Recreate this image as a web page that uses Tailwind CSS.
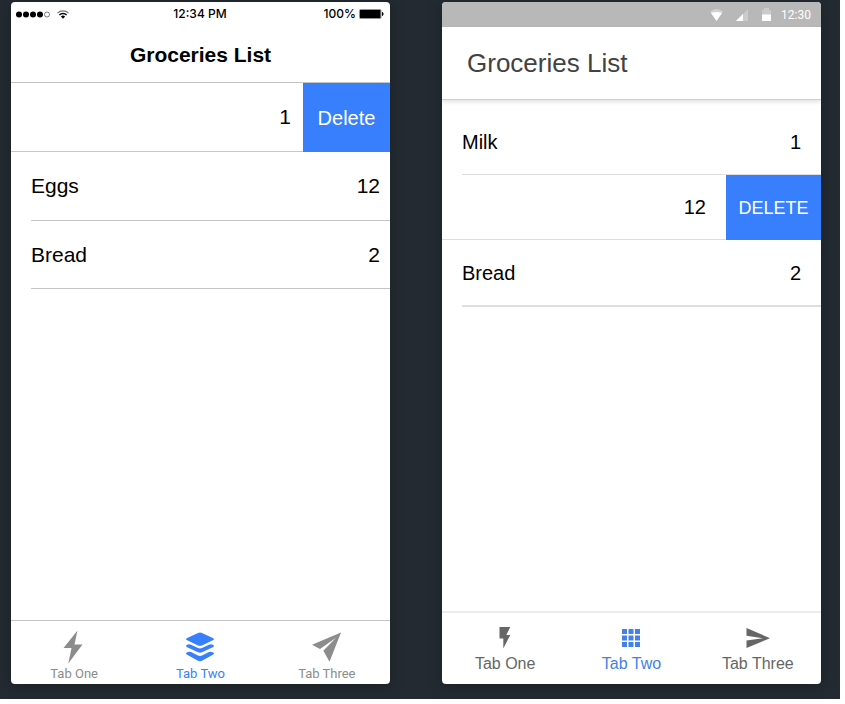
<!DOCTYPE html>
<html lang="en">
<head>
<meta charset="utf-8">
<meta name="viewport" content="width=device-width, initial-scale=1">
<title>Groceries List</title>
<script src="https://cdn.jsdelivr.net/npm/@tailwindcss/browser@4"></script>
</head>
<body class="flex min-h-screen bg-white pr-[5px] pb-[5px] font-['Liberation_Sans',Arial,sans-serif] text-black">
<main class="flex flex-1 gap-[52px] bg-[#232a31] pt-[2px] pr-[19px] pb-[15px] pl-[11px]">

  <!-- iOS -->
  <section class="flex min-w-0 flex-1 flex-col overflow-hidden rounded bg-white shadow-[0_2px_14px_rgba(0,0,0,0.25)]" aria-label="iOS">
    <div class="grid h-6 grid-cols-3 items-center pr-[6px] pl-[5px] font-[Inter,sans-serif] text-xs font-medium">
      <div class="flex items-center gap-[7px]">
        <svg class="h-[7px] w-[34px]" viewBox="0 0 34 7" aria-hidden="true">
          <circle cx="3" cy="3.5" r="3"/><circle cx="10" cy="3.5" r="3"/><circle cx="17" cy="3.5" r="3"/><circle cx="24" cy="3.5" r="3"/>
          <circle cx="31" cy="3.5" r="2.5" fill="none" stroke="#444" stroke-width=".7"/>
        </svg>
        <svg class="h-[9px] w-[12px]" viewBox="0 0 12 9" fill="none" aria-hidden="true">
          <path d="M.5 3.1a7.8 7.8 0 0 1 11 0" stroke="#777" stroke-width="1.3"/>
          <path d="M2.4 5a5.1 5.1 0 0 1 7.2 0" stroke="#000" stroke-width="1.4"/>
          <path d="M6 8.8 3.9 6.6a3 3 0 0 1 4.2 0z" fill="#000"/>
        </svg>
      </div>
      <div class="text-center">12:34 PM</div>
      <div class="flex items-center justify-end gap-[3px]">
        <span>100%</span>
        <svg class="h-[10px] w-[25px]" viewBox="0 0 25 10" aria-hidden="true">
          <rect x=".5" y=".5" width="21.5" height="9" rx="1" fill="#fff" stroke="#777" stroke-width=".8"/>
          <rect x="1" y="1" width="20.5" height="8"/>
          <path d="M23 3c2 .6 2 3.400 0 4z"/>
        </svg>
      </div>
    </div>
    <header class="flex h-[57px] items-center justify-center border-b border-[#c4c4c4] pt-[2px]">
      <h1 class="text-[21px] font-bold">Groceries List</h1>
    </header>
    <ul class="flex-1 text-[21px]">
      <li class="flex h-[69px]">
        <div class="flex flex-1 items-center justify-end border-b border-[#c8c7cc] pr-3">1</div>
        <button type="button" class="w-[87px] bg-[#387ffe] text-xl text-white">Delete</button>
      </li>
      <li class="ml-5 flex h-[69px] items-center justify-between border-b border-[#c4c4c4] pr-[10px]"><span>Eggs</span><span>12</span></li>
      <li class="ml-5 flex h-[68px] items-center justify-between border-b border-[#c4c4c4] pr-[10px]"><span>Bread</span><span>2</span></li>
    </ul>
    <nav class="grid h-16 grid-cols-3 border-t border-[#c4c4c4] font-[Roboto,sans-serif] text-[13px] leading-4 text-[#8c8c8c]">
      <button type="button" class="flex flex-col items-center pt-[9px]">
        <svg class="mb-px h-[35px] w-[30px]" viewBox="0 0 30 35" fill="currentColor" aria-hidden="true"><path d="M18.500 .5 4.500 18h8L9.300 33.500 23.500 14.500h-8z"/></svg>
        <span>Tab One</span>
      </button>
      <button type="button" class="flex flex-col items-center pt-[9px] text-[#387ffe]" aria-current="page">
        <svg class="mb-px h-[35px] w-[30px]" viewBox="0 0 30 35" fill="currentColor" aria-hidden="true">
          <path d="M13 3q2-1 4 0l11.300 5.300q1.500.9 0 1.800L17 15.400q-2 .9-4 0L1.700 10.100q-1.500-.9 0-1.800z"/>
          <path d="M1.700 15.100q2.300-1.500 4.300-.4l7 3.400q2 .9 4 0l7-3.400q2-1.100 4.300.4 1.500 1 0 1.900L17 22.300q-2 .9-4 0L1.700 17q-1.500-.9 0-1.900z"/>
          <path d="M1.700 22.500Q4 21 6 22.100l7 3.400q2 .9 4 0l7-3.400q2-1.100 4.300.4 1.500 1 0 1.900L17 30.700q-2 .9-4 0L1.700 24.400q-1.500-.9 0-1.900z"/>
        </svg>
        <span>Tab Two</span>
      </button>
      <button type="button" class="flex flex-col items-center pt-[9px]">
        <svg class="mb-px h-[35px] w-[30px]" viewBox="0 0 30 35" fill="currentColor" aria-hidden="true"><path d="M29 2.500 0 14.800 8 19 24 7.800 11.300 20.800 17.500 31.800z"/></svg>
        <span>Tab Three</span>
      </button>
    </nav>
  </section>

  <!-- Material -->
  <section class="flex min-w-0 flex-1 flex-col overflow-hidden rounded bg-white shadow-[0_2px_14px_rgba(0,0,0,0.25)]" aria-label="Material Design">
    <div class="flex h-[25px] items-center justify-end bg-[#b8b8b8] pr-[10px] font-[Roboto,sans-serif] text-xs text-white">
      <svg class="mr-[13px] h-3 w-[13px]" viewBox="0 0 13 12" aria-hidden="true"><path d="M0 2.500q6.500-5 13 0L6.500 12z" fill="#d2d2d2"/><path d="M1 4q5.500-2 11 0L6.500 12z" fill="#fff"/></svg>
      <svg class="mr-[14px] h-3 w-3" viewBox="0 0 12 12" aria-hidden="true"><path d="M12 0v12H0z" fill="#cbcbcb"/><path d="M7 5v7H0z" fill="#fff"/></svg>
      <svg class="mr-[10px] h-[13px] w-[9px]" viewBox="0 0 9 13" aria-hidden="true"><path d="M0 2h2V0h5v2h2v5H0z" fill="#cbcbcb"/><path d="M0 6.500h9V13H0z" fill="#fff"/></svg>
      <span>12:30</span>
    </div>
    <header class="flex h-[73px] items-center border-b border-[#d0d0d0] pl-[25px] shadow-[0_2px_4px_rgba(0,0,0,0.12)]">
      <h1 class="text-[26px] text-[#424242]">Groceries List</h1>
    </header>
    <ul class="flex-1 pt-[10px] text-xl">
      <li class="ml-5 flex h-[65px] items-center justify-between border-b border-[#dedede] pr-5"><span>Milk</span><span>1</span></li>
      <li class="flex h-[65px]">
        <div class="flex flex-1 items-center justify-end border-b border-[#dedede] pr-5">12</div>
        <button type="button" class="w-[95px] bg-[#387ffe] text-lg text-white">DELETE</button>
      </li>
      <li class="ml-5 flex h-[67px] items-center justify-between border-b-2 border-[#dedede] pr-5"><span>Bread</span><span>2</span></li>
    </ul>
    <nav class="grid h-[73px] grid-cols-3 border-t-2 border-[#ececec] text-base leading-5 text-[#666]">
      <button type="button" class="flex flex-col items-center pt-[11px]">
        <svg class="mb-[6px] h-6 w-6" viewBox="0 0 24 24" fill="currentColor" aria-hidden="true"><path d="M6.500 3v11.500h3.800V24.500l7-13.500h-4L17.300 3z"/></svg>
        <span>Tab One</span>
      </button>
      <button type="button" class="flex flex-col items-center pt-[11px] text-[#4480e8]" aria-current="page">
        <svg class="mb-[6px] h-6 w-6" viewBox="0 0 24 24" fill="currentColor" aria-hidden="true"><path d="M3 5h5v5H3zm6.500 0h5v5h-5zM16 5h5v5h-5zM3 11.500h5v5H3zm6.500 0h5v5h-5zm6.500 0h5v5h-5zM3 18h5v5H3zm6.500 0h5v5h-5zm6.500 0h5v5h-5z"/></svg>
        <span>Tab Two</span>
      </button>
      <button type="button" class="flex flex-col items-center pt-[11px]">
        <svg class="mb-[6px] h-6 w-6" viewBox="0 0 24 24" fill="currentColor" aria-hidden="true"><path d="M.500 4 24 14.200 .500 24v-7.500L17 14.200 .500 11.700z"/></svg>
        <span>Tab Three</span>
      </button>
    </nav>
  </section>
</main>
</body>
</html>
